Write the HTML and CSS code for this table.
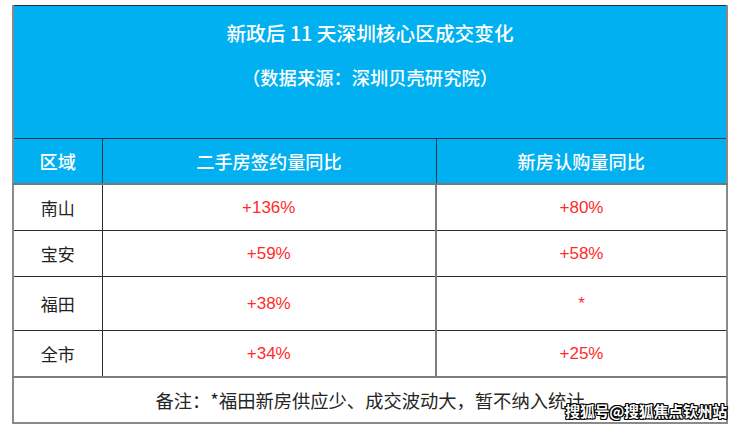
FILE: index.html
```html
<!DOCTYPE html>
<html lang="zh-CN">
<head>
<meta charset="utf-8">
<link rel="stylesheet" href="styles.css">
</head>
<body>
<div class="page">
  <table class="sheet">
    <colgroup>
      <col class="c1"><col class="c2"><col class="c3">
    </colgroup>
    <tr class="title-row">
      <td colspan="3">
        <div class="title">新政后 11 天深圳核心区成交变化</div>
        <div class="subtitle">（数据来源：深圳贝壳研究院）</div>
      </td>
    </tr>
    <tr class="head-row">
      <th>区域</th>
      <th>二手房签约量同比</th>
      <th>新房认购量同比</th>
    </tr>
    <tr class="row">
      <td class="area">南山</td><td class="num">+136%</td><td class="num">+80%</td>
    </tr>
    <tr class="row">
      <td class="area">宝安</td><td class="num">+59%</td><td class="num">+58%</td>
    </tr>
    <tr class="row tall">
      <td class="area">福田</td><td class="num">+38%</td><td class="num">*</td>
    </tr>
    <tr class="row">
      <td class="area">全市</td><td class="num">+34%</td><td class="num">+25%</td>
    </tr>
    <tr class="note-row">
      <td colspan="3">备注：*福田新房供应少、成交波动大，暂不纳入统计</td>
    </tr>
  </table>
  <div class="watermark">搜狐号@搜狐焦点钦州站</div>
</div>
</body>
</html>
```
FILE: styles.css
```css
html, body {
  margin: 0;
  padding: 0;
  background: #ffffff;
}
.page {
  position: relative;
  width: 740px;
  height: 429px;
  padding: 5px 0 0 12px;
  box-sizing: border-box;
  font-family: "Noto Sans CJK SC", "Noto Sans", sans-serif;
}
.sheet {
  border-collapse: collapse;
  table-layout: fixed;
  width: 716px;
  border-top: 1px solid #2b2b2b;
  border-left: 2px solid #8a8a8a;
  border-right: 2px solid #8a8a8a;
  border-bottom: 2px solid #8a8a8a;
}
.c1 { width: 89px; }
.c2 { width: 334px; }
.c3 { width: 291px; }

.title-row td {
  background: #00b0f0;
  height: 132px;
  padding: 0;
  vertical-align: top;
  text-align: center;
  color: #ffffff;
  border-bottom: 1px solid #1f3a4a;
}
.title {
  font-size: 19.7px;
  line-height: 28px;
  padding-top: 13px;
  font-weight: 500;
}
.subtitle {
  font-size: 18.3px;
  line-height: 24px;
  margin-top: 18px;
  font-weight: 500;
}
.head-row th {
  background: #00b0f0;
  color: #ffffff;
  font-weight: 500;
  font-size: 18.2px;
  height: 44px;
  padding: 0;
  border-right: 1px solid #1f3a4a;
  border-bottom: 2px solid #6d7b82;
}
.head-row th:last-child { border-right: none; }
.row td {
  height: 45px;
  padding: 0;
  text-align: center;
  border-right: 1px solid #2b2b2b;
  border-bottom: 1px solid #2b2b2b;
}
.row td:last-child { border-right: none; }
.row td:nth-child(2) { border-right: 2px solid #7d7d7d; }
.row.tall td { height: 53px; }
.area {
  font-size: 17px;
  color: #222222;
}
.num {
  font-family: "Liberation Sans", Arial, sans-serif;
  font-size: 17px;
  color: #ff2b2b;
}
.note-row td {
  height: 44px;
  padding: 0;
  text-align: center;
  font-size: 18.3px;
  color: #262626;
  border-top: 2px solid #7d7d7d;
}
.watermark {
  position: absolute;
  right: 13px;
  top: 401px;
  font-size: 15px;
  line-height: 20px;
  font-weight: 700;
  color: #ffffff;
  letter-spacing: -0.3px;
  text-shadow:
    1px 0 0 #000, -1px 0 0 #000, 0 1px 0 #000, 0 -1px 0 #000,
    1px 1px 0 #000, -1px -1px 0 #000, 1px -1px 0 #000, -1px 1px 0 #000;
}
```
